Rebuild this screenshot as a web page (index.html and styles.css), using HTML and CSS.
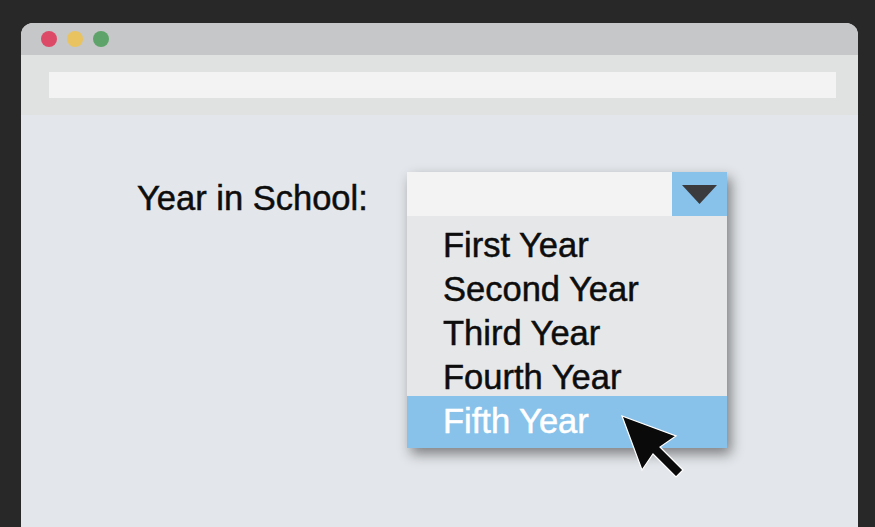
FILE: index.html
```html
<!DOCTYPE html>
<html>
<head>
  <meta charset="UTF-8">
  <title>Year in School</title>
  <link rel="stylesheet" href="styles.css">
</head>
<body>
  <div class="window">
    <div class="titlebar">
      <span class="dot red"></span>
      <span class="dot yellow"></span>
      <span class="dot green"></span>
    </div>
    <div class="toolbar">
      <div class="address"></div>
    </div>
    <div class="content">
      <div class="row">
        <label class="field-label">Year in School:</label>
        <div class="dropdown">
          <div class="select">
            <div class="select-value"></div>
            <div class="select-btn">
              <svg width="35" height="19" viewBox="0 0 35 19"><polygon points="0,0 35,0 17.5,19" fill="#3b3a3d"/></svg>
            </div>
          </div>
          <ul class="options">
            <li>First Year</li>
            <li>Second Year</li>
            <li>Third Year</li>
            <li>Fourth Year</li>
            <li class="selected">Fifth Year</li>
          </ul>
          <!-- mouse pointer over the highlighted option -->
          <svg class="cursor" width="66" height="66" viewBox="-2 -2 66 66">
            <polygon points="0,0 20,54 31,38 54,61 61,54 38,31 54,20" fill="#0a0a0a" stroke="#fff" stroke-width="1.2"/>
          </svg>
        </div>
      </div>
    </div>
  </div>
</body>
</html>
```

FILE: styles.css
```css
body {
  margin: 0;
  height: 527px;
  overflow: hidden;
  background-color: #282828;
  font-family: "Liberation Sans", Arial, sans-serif;
  padding: 23px 17px 0 21px;
}
.window {
  height: 504px;
  border-radius: 12px 12px 0 0;
  overflow: hidden;
  display: flex;
  flex-direction: column;
  background-color: #e3e6ea;
}
.titlebar {
  height: 32px;
  background-color: #c6c7c8;
  display: flex;
  align-items: center;
  gap: 10px;
  padding-left: 20px;
}
.dot {
  width: 16px;
  height: 16px;
  border-radius: 50%;
}
.red { background-color: #dc4a68; }
.yellow { background-color: #e9c35f; }
.green { background-color: #5ea46a; }
.toolbar {
  height: 60px;
  background-color: #e0e2e1;
  padding: 17px 22px 17px 28px;
  box-sizing: border-box;
}
.address {
  height: 26px;
  background-color: #f3f3f3;
}
.content {
  flex: 1;
  padding: 57px 0 0 116px;
}
.row {
  display: flex;
  align-items: flex-start;
}
.field-label {
  width: 270px;
  font-size: 34.5px;
  line-height: 44px;
  padding-top: 4px;
  color: #0d0d0d;
  -webkit-text-stroke: 0.5px #0d0d0d;
}
.dropdown {
  position: relative;
  width: 320px;
  box-shadow: 4px 6px 12px rgba(0, 0, 0, 0.45);
}
.select {
  display: flex;
  height: 44px;
}
.select-value {
  flex: 1;
  background-color: #f3f3f3;
}
.select-btn {
  width: 55px;
  background-color: #88c2ea;
  display: flex;
  align-items: center;
  justify-content: center;
}
.options {
  list-style: none;
  margin: 0;
  padding: 7px 0 0;
  background-color: #e6e7e9;
}
.options li {
  height: 44px;
  line-height: 44px;
  padding-left: 36px;
  font-size: 34.5px;
  color: #0d0d0d;
  -webkit-text-stroke: 0.5px #0d0d0d;
}
.options li.selected {
  margin-top: -3px;
  padding-top: 3px;
  padding-bottom: 5px;
  background-color: #88c2ea;
  color: #fff;
  -webkit-text-stroke: 0.5px #fff;
}
.cursor {
  position: absolute;
  left: 213px;
  top: 242px;
}
```
